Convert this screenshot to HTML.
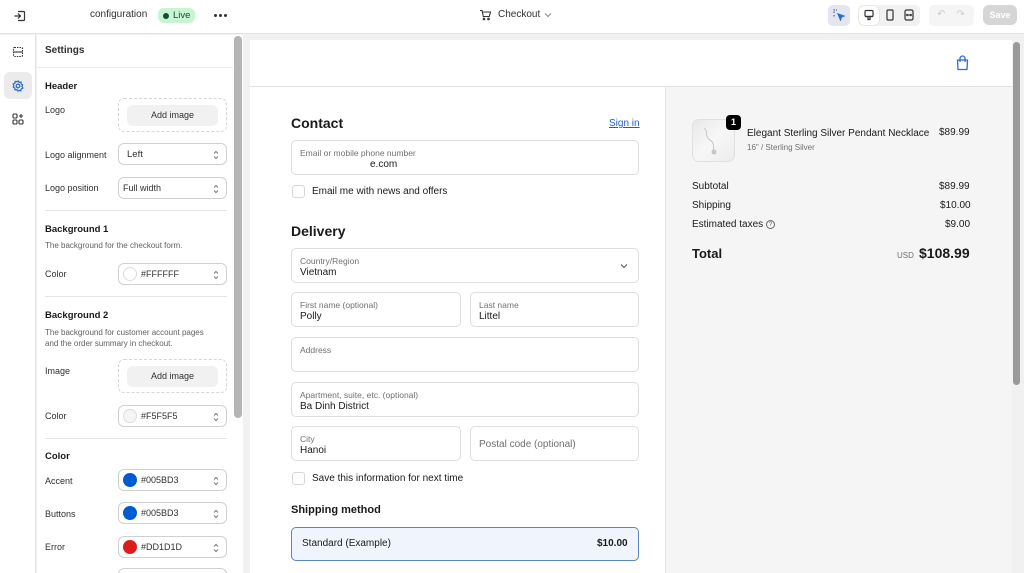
<!DOCTYPE html>
<html style="width:1024px;height:573px;overflow:hidden;background:#f1f1f1"><head><meta charset="utf-8"><style>
*{box-sizing:border-box;margin:0;padding:0}
body{width:1024px;height:573px;overflow:hidden;background:#f1f1f1;font-family:"Liberation Sans",sans-serif;color:#303030;position:relative}
.a{position:absolute}
.t{font-size:9px;color:#303030}
.sel{position:absolute;left:118px;width:109px;height:22px;border:1px solid #d0d0d0;border-radius:6px;background:#fff;font-size:9px;display:flex;align-items:center;padding-left:8px}
.sel svg{position:absolute;right:7px;top:6px}
.sw{width:14px;height:14px;border-radius:50%;margin-right:4px;margin-left:-4px}
.div{position:absolute;left:45px;width:182px;height:1px;background:#e6e6e6}
.f{position:absolute;border:1px solid #dedede;border-radius:5px;background:#fff}
.f .l{position:absolute;left:8px;top:7px;font-size:8.5px;color:#707070}
.f .v{position:absolute;left:8px;top:18px;font-size:10px;color:#1a1a1a}
.cb{position:absolute;width:13px;height:13px;border:1px solid #d6d6d6;border-radius:3px;background:#fff}
.h{position:absolute;font-weight:bold;color:#1a1a1a}
</style></head><body>
<div class="a" style="left:0;top:0;width:1024px;height:34px;background:#fff;border-bottom:1px solid #e3e3e3"></div>
<svg class="a" style="left:13px;top:9px" width="14" height="14" viewBox="0 0 14 14" fill="none" stroke="#333" stroke-width="1.2"><path d="M5 2.5h5.5a1 1 0 0 1 1 1v7a1 1 0 0 1-1 1H5"/><path d="M1.5 7h6M5 4.5L7.5 7 5 9.5"/></svg>
<div class="a" style="left:90px;top:9px;font-size:10px;color:#303030">configuration</div>
<div class="a" style="left:158px;top:8px;width:37px;height:15px;background:#c9f4d4;border-radius:6px;font-size:9.5px;color:#0c5132;padding-left:15px;line-height:15px">Live</div>
<div class="a" style="left:163px;top:13px;width:6px;height:6px;border-radius:50%;background:#0c5132"></div>
<div class="a" style="left:214px;top:14px;width:3px;height:3px;border-radius:50%;background:#333;box-shadow:5px 0 #333,10px 0 #333"></div>
<svg class="a" style="left:479px;top:9px" width="13" height="12" viewBox="0 0 13 12" fill="none" stroke="#333" stroke-width="1.1"><path d="M1 1.5h2l1.3 6h6l1.2-4.5H3.6"/><circle cx="5" cy="10" r=".8"/><circle cx="9.5" cy="10" r=".8"/></svg>
<div class="a" style="left:498px;top:9px;font-size:10px;color:#303030">Checkout</div>
<svg class="a" style="left:544px;top:12px" width="8" height="6" viewBox="0 0 8 6" fill="none" stroke="#888" stroke-width="1"><path d="M1 1.5l3 3 3-3"/></svg>
<div class="a" style="left:828px;top:5px;width:22px;height:21px;background:#e3e6ee;border-radius:5px"></div>
<svg class="a" style="left:833px;top:9px" width="12" height="12" viewBox="0 0 12 12" fill="none" stroke="#2c6ecb" stroke-width="1.2"><path d="M1 4V1h3M1 6v2" stroke-dasharray="1.5 1"/><path d="M5 5l6 2-2.5 1L7.5 11z" fill="#2c6ecb"/></svg>
<div class="a" style="left:858px;top:5px;width:62px;height:21px;background:#f1f1f1;border-radius:5px"></div>
<div class="a" style="left:859px;top:6px;width:20px;height:19px;background:#fff;border-radius:5px;box-shadow:0 0 1px #bbb"></div>
<svg class="a" style="left:863px;top:9px" width="12" height="12" viewBox="0 0 12 12" fill="none" stroke="#333" stroke-width="1.2"><rect x="2" y="1.5" width="8" height="6" rx="1"/><path d="M2 7.5h8M5 8v2.5h2V8"/></svg>
<svg class="a" style="left:884px;top:9px" width="12" height="12" viewBox="0 0 12 12" fill="none" stroke="#333" stroke-width="1.2"><rect x="3" y="1" width="6" height="10" rx="1"/></svg>
<svg class="a" style="left:903px;top:9px" width="12" height="12" viewBox="0 0 12 12" fill="none" stroke="#333" stroke-width="1.2"><rect x="2" y="1" width="8" height="10" rx="1.5"/><path d="M3.5 6h5M4.5 5l-1 1 1 1M7.5 5l1 1-1 1"/></svg>
<div class="a" style="left:929px;top:5px;width:45px;height:21px;background:#f5f5f5;border-radius:5px;font-size:10px;color:#ccc;padding:4px 0 0 8px">↶&nbsp;&nbsp;&nbsp;&nbsp;↷</div>
<div class="a" style="left:983px;top:5px;width:34px;height:20px;background:#d6d6d6;border-radius:6px;font-size:9px;font-weight:bold;color:#fff;text-align:center;line-height:20px">Save</div>
<div class="a" style="left:0;top:35px;width:36px;height:538px;background:#fff;border-right:1px solid #e3e3e3"></div>
<svg class="a" style="left:12px;top:46px" width="12" height="12" viewBox="0 0 12 12" fill="none" stroke="#333" stroke-width="1.1"><rect x="1.5" y="1.5" width="9" height="9" rx="1" stroke-dasharray="1.5 1"/><path d="M1.5 6h9"/></svg>
<div class="a" style="left:4px;top:72px;width:28px;height:27px;background:#ebebeb;border-radius:6px"></div>
<svg class="a" style="left:12px;top:80px" width="12" height="12" viewBox="0 0 12 12" fill="none" stroke="#2c6ecb" stroke-width="1.3"><circle cx="6" cy="6" r="1.8"/><path d="M6 1l1.2 1.3 1.8-.2.2 1.8L10.5 5 10 6.5l.8 1.6-1.6.9-.4 1.8-1.8-.4L6 11l-1.2-1.4-1.8.2-.3-1.8L1.3 7 1.8 5.6 1.2 4l1.7-.8.3-1.8 1.7.4z"/></svg>
<svg class="a" style="left:12px;top:113px" width="12" height="12" viewBox="0 0 12 12" fill="none" stroke="#333" stroke-width="1.1"><rect x="1" y="1" width="4" height="4" rx="1"/><rect x="1" y="7" width="4" height="4" rx="1"/><rect x="7" y="7" width="4" height="4" rx="1"/><path d="M9 1v4M7 3h4"/></svg>
<div class="a" style="left:37px;top:35px;width:206px;height:538px;background:#fff"></div>
<div class="a" style="left:234px;top:36px;width:8px;height:382px;background:#b5b5b5;border-radius:4px"></div>
<div class="a" style="left:45px;top:45px;font-size:10px;font-weight:bold;color:#303030">Settings</div>
<div class="a" style="left:37px;top:67px;width:196px;height:1px;background:#ececec"></div>
<div class="h" style="left:45px;top:81px;font-size:9.5px">Header</div>
<div class="t a" style="left:45px;top:105px">Logo</div>
<div class="a" style="left:118px;top:98px;width:109px;height:34px;border:1px dashed #d6d6d6;border-radius:6px"></div>
<div class="a" style="left:127px;top:105px;width:91px;height:21px;background:#f1f1f1;border-radius:6px;font-size:9px;text-align:center;line-height:21px;color:#303030">Add image</div>
<div class="t a" style="left:45px;top:150px">Logo alignment</div>
<div class="sel" style="top:143px;font-size:9.5px">Left<svg width="6" height="10" viewBox="0 0 6 10" fill="none" stroke="#777"><path d="M1 3.5l2-2 2 2M1 6.5l2 2 2-2"/></svg></div>
<div class="t a" style="left:45px;top:183px">Logo position</div>
<div class="sel" style="top:177px;padding-left:4px">Full width<svg width="6" height="10" viewBox="0 0 6 10" fill="none" stroke="#777"><path d="M1 3.5l2-2 2 2M1 6.5l2 2 2-2"/></svg></div>
<div class="div" style="top:210px"></div>
<div class="h" style="left:45px;top:224px;font-size:9.5px">Background 1</div>
<div class="a" style="left:45px;top:241px;font-size:8px;color:#616161">The background for the checkout form.</div>
<div class="t a" style="left:45px;top:269px">Color</div>
<div class="sel" style="top:263px"><span class="sw" style="background:#fff;border:1px solid #ddd"></span>#FFFFFF<svg width="6" height="10" viewBox="0 0 6 10" fill="none" stroke="#777"><path d="M1 3.5l2-2 2 2M1 6.5l2 2 2-2"/></svg></div>
<div class="div" style="top:296px"></div>
<div class="h" style="left:45px;top:310px;font-size:9.5px">Background 2</div>
<div class="a" style="left:45px;top:327px;font-size:8px;color:#616161;line-height:11px">The background for customer account pages<br>and the order summary in checkout.</div>
<div class="t a" style="left:45px;top:366px">Image</div>
<div class="a" style="left:118px;top:359px;width:109px;height:34px;border:1px dashed #d6d6d6;border-radius:6px"></div>
<div class="a" style="left:127px;top:366px;width:91px;height:21px;background:#f1f1f1;border-radius:6px;font-size:9px;text-align:center;line-height:21px;color:#303030">Add image</div>
<div class="t a" style="left:45px;top:411px">Color</div>
<div class="sel" style="top:405px"><span class="sw" style="background:#f5f5f5;border:1px solid #ddd"></span>#F5F5F5<svg width="6" height="10" viewBox="0 0 6 10" fill="none" stroke="#777"><path d="M1 3.5l2-2 2 2M1 6.5l2 2 2-2"/></svg></div>
<div class="div" style="top:438px"></div>
<div class="h" style="left:45px;top:451px;font-size:9.5px">Color</div>
<div class="t a" style="left:45px;top:476px">Accent</div>
<div class="sel" style="top:469px"><span class="sw" style="background:#005bd3"></span>#005BD3<svg width="6" height="10" viewBox="0 0 6 10" fill="none" stroke="#777"><path d="M1 3.5l2-2 2 2M1 6.5l2 2 2-2"/></svg></div>
<div class="t a" style="left:45px;top:509px">Buttons</div>
<div class="sel" style="top:502px"><span class="sw" style="background:#005bd3"></span>#005BD3<svg width="6" height="10" viewBox="0 0 6 10" fill="none" stroke="#777"><path d="M1 3.5l2-2 2 2M1 6.5l2 2 2-2"/></svg></div>
<div class="t a" style="left:45px;top:542px">Error</div>
<div class="sel" style="top:536px"><span class="sw" style="background:#dd1d1d"></span>#DD1D1D<svg width="6" height="10" viewBox="0 0 6 10" fill="none" stroke="#777"><path d="M1 3.5l2-2 2 2M1 6.5l2 2 2-2"/></svg></div>
<div class="sel" style="top:568px"></div>
<div class="a" style="left:250px;top:40px;width:762px;height:533px;background:#fff"></div>
<div class="a" style="left:250px;top:86px;width:762px;height:1px;background:#e3e3e3"></div>
<div class="a" style="left:1013px;top:42px;width:7px;height:343px;background:#9a9a9a;border-radius:4px"></div>
<svg class="a" style="left:955px;top:55px" width="15" height="16" viewBox="0 0 15 16" fill="none" stroke="#2c6ecb" stroke-width="1.3"><path d="M2.5 5h10l-.5 9.5h-9z" stroke-linejoin="round"/><path d="M5 7V3.5a2.5 2.5 0 0 1 5 0V7"/></svg>
<div class="a" style="left:665px;top:87px;width:347px;height:486px;background:#f5f5f5;border-left:1px solid #e6e6e6"></div>
<div class="h" style="left:291px;top:115px;font-size:14px">Contact</div>
<div class="a" style="left:609px;top:118px;font-size:10px;color:#1a5fc5;text-decoration:underline">Sign in</div>
<div class="f" style="left:291px;top:140px;width:348px;height:35px"><div class="l">Email or mobile phone number</div><div class="v" style="left:78px">e.com</div></div>
<div class="cb" style="left:292px;top:185px"></div>
<div class="a" style="left:312px;top:186px;font-size:10px;color:#1a1a1a">Email me with news and offers</div>
<div class="h" style="left:291px;top:223px;font-size:14px">Delivery</div>
<div class="f" style="left:291px;top:248px;width:348px;height:35px"><div class="l">Country/Region</div><div class="v">Vietnam</div><svg class="a" style="right:10px;top:14px" width="8" height="6" viewBox="0 0 8 6" fill="none" stroke="#555"><path d="M1 1.5l3 3 3-3"/></svg></div>
<div class="f" style="left:291px;top:292px;width:170px;height:35px"><div class="l">First name (optional)</div><div class="v">Polly</div></div>
<div class="f" style="left:470px;top:292px;width:169px;height:35px"><div class="l">Last name</div><div class="v">Littel</div></div>
<div class="f" style="left:291px;top:337px;width:348px;height:35px"><div class="l">Address</div></div>
<div class="f" style="left:291px;top:382px;width:348px;height:35px"><div class="l">Apartment, suite, etc. (optional)</div><div class="v">Ba Dinh District</div></div>
<div class="f" style="left:291px;top:426px;width:170px;height:35px"><div class="l">City</div><div class="v">Hanoi</div></div>
<div class="f" style="left:470px;top:426px;width:169px;height:35px"><div class="a" style="left:8px;top:12px;font-size:10px;color:#707070">Postal code (optional)</div></div>
<div class="cb" style="left:292px;top:472px"></div>
<div class="a" style="left:312px;top:473px;font-size:10px;color:#1a1a1a">Save this information for next time</div>
<div class="h" style="left:291px;top:504px;font-size:11px">Shipping method</div>
<div class="a" style="left:291px;top:527px;width:348px;height:34px;background:#f0f5fd;border:1px solid #5a86c0;border-radius:5px"></div>
<div class="a" style="left:302px;top:538px;font-size:10px;color:#1a1a1a">Standard (Example)</div>
<div class="a" style="left:597px;top:538px;font-size:10px;font-weight:bold;color:#1a1a1a">$10.00</div>
<div class="a" style="left:692px;top:119px;width:43px;height:43px;border:1px solid #e0e0e0;border-radius:7px;background:linear-gradient(135deg,#e8e8e8,#f7f7f7 50%,#ececec)"></div>
<svg class="a" style="left:700px;top:125px" width="25" height="32" viewBox="0 0 25 32" fill="none" stroke="#bbb" stroke-width=".8"><path d="M4 3c5 4 0 8 6 12s2 8 4 10"/><circle cx="14" cy="27" r="2" fill="#ccc"/></svg>
<div class="a" style="left:726px;top:115px;width:15px;height:15px;background:#000;border-radius:4px;color:#fff;font-size:9px;font-weight:bold;text-align:center;line-height:15px">1</div>
<div class="a" style="left:747px;top:128px;font-size:10px;color:#1a1a1a">Elegant Sterling Silver Pendant Necklace</div>
<div class="a" style="left:747px;top:143px;font-size:8px;color:#707070">16" / Sterling Silver</div>
<div class="a" style="left:939px;top:127px;font-size:10px;color:#1a1a1a">$89.99</div>
<div class="a" style="left:692px;top:181px;font-size:10px;color:#1a1a1a">Subtotal</div>
<div class="a" style="left:939px;top:181px;font-size:10px;color:#1a1a1a">$89.99</div>
<div class="a" style="left:692px;top:200px;font-size:10px;color:#1a1a1a">Shipping</div>
<div class="a" style="left:940px;top:200px;font-size:10px;color:#1a1a1a">$10.00</div>
<div class="a" style="left:692px;top:219px;font-size:10px;color:#1a1a1a">Estimated taxes</div>
<div class="a" style="left:766px;top:220px;width:9px;height:9px;border:1px solid #666;border-radius:50%;font-size:6px;text-align:center;line-height:8px;color:#555">?</div>
<div class="a" style="left:945px;top:219px;font-size:10px;color:#1a1a1a">$9.00</div>
<div class="h" style="left:692px;top:246px;font-size:13px">Total</div>
<div class="a" style="left:897px;top:251px;font-size:8px;color:#707070">USD</div>
<div class="h" style="left:919px;top:245px;font-size:14px">$108.99</div>
</body></html>
